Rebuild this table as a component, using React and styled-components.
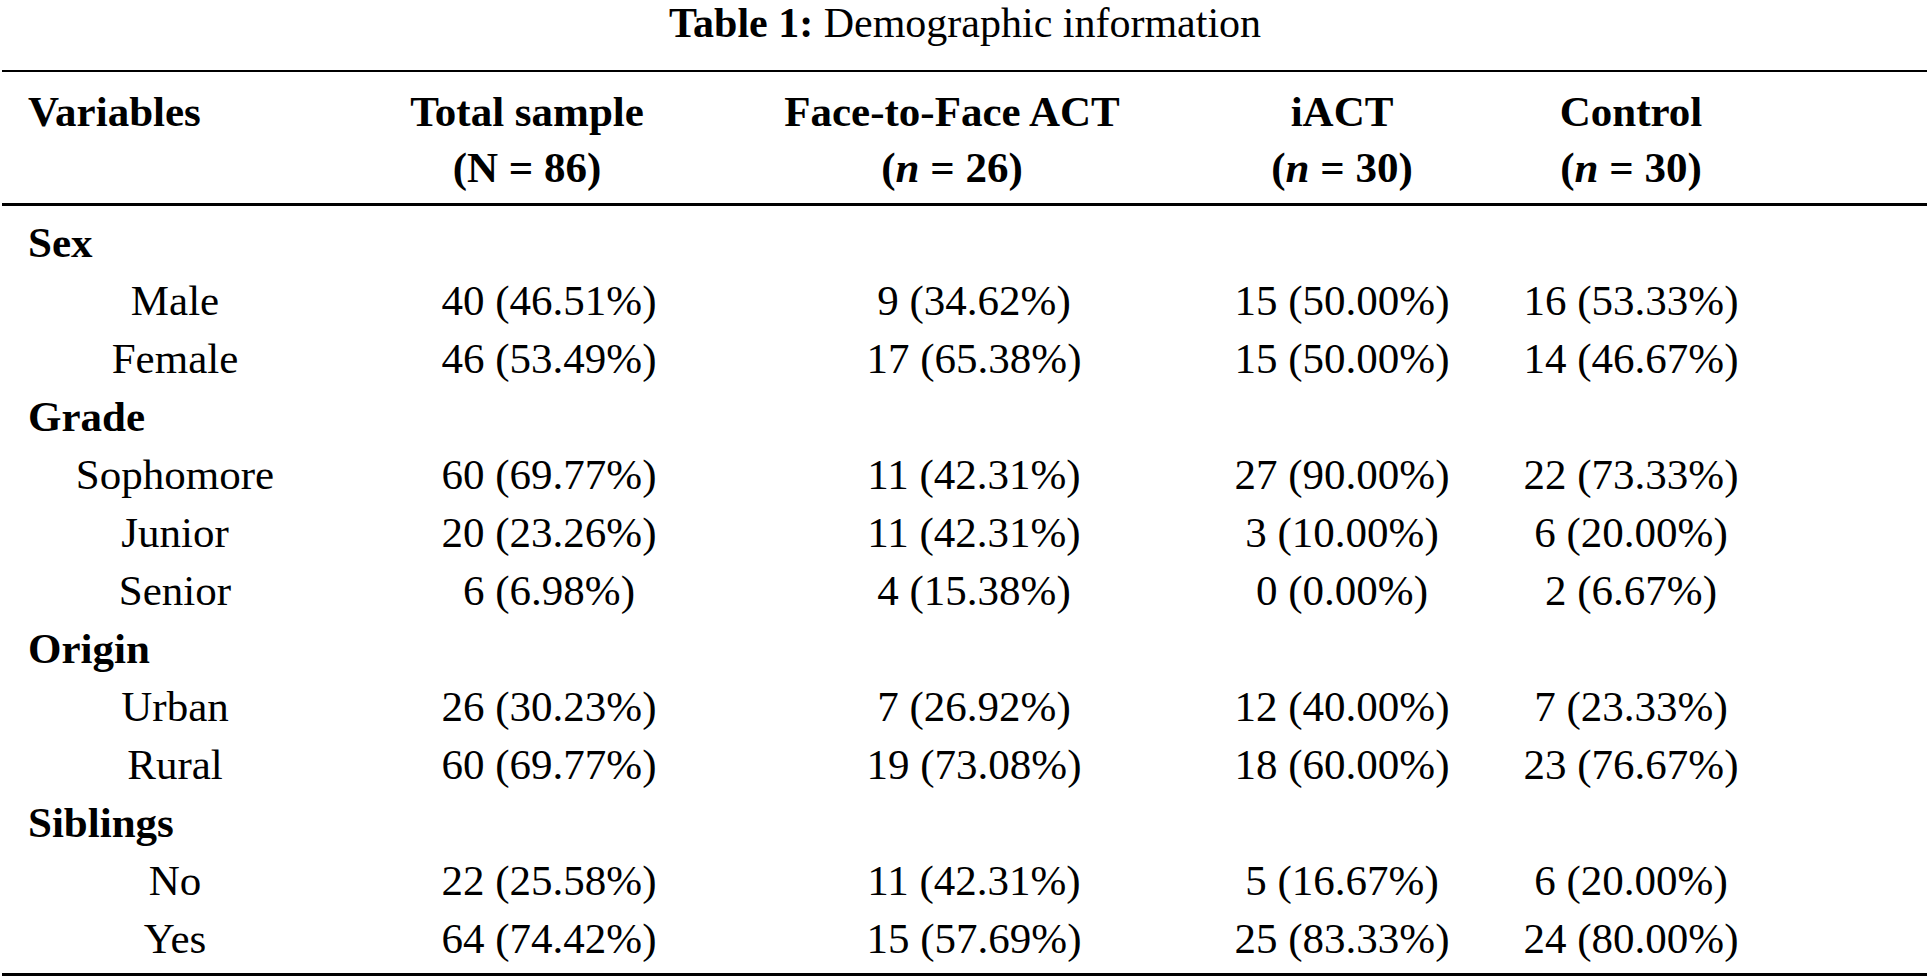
import React from "react";
import styled, { createGlobalStyle } from "styled-components";

const GlobalStyle = createGlobalStyle`
  html, body {
    margin: 0;
    padding: 0;
    background: #ffffff;
  }
  body {
    font-family: "Liberation Serif", "Times New Roman", serif;
    color: #000000;
  }
`;

const COLUMNS = "346px 358px 492px 288px 290px 1fr";

const Page = styled.main`
  width: 1930px;
  height: 978px;
  overflow: hidden;
  font-family: "Liberation Serif", "Times New Roman", serif;
  font-size: 43px;
  color: #000;
`;

const Caption = styled.div`
  height: 47px;
  line-height: 47px;
  font-size: 42px;
  text-align: center;
  margin-bottom: 23px;
  white-space: nowrap;
`;

const CaptionLabel = styled.span`
  font-weight: 700;
`;

const Table = styled.section`
  margin-left: 2px;
  width: 1925px;
  border-top: 2px solid #000;
  border-bottom: 3px solid #000;
`;

const Head = styled.div`
  display: grid;
  grid-template-columns: ${COLUMNS};
  padding: 12px 0 7px;
  border-bottom: 3px solid #000;
  font-weight: 700;
  line-height: 56px;
`;

const HeadCell = styled.div`
  display: flex;
  flex-direction: column;
  align-items: ${(p) => (p.$left ? "flex-start" : "center")};
  padding-left: ${(p) => (p.$left ? "26px" : "0")};
  white-space: nowrap;
`;

const Body = styled.div`
  padding: 8px 0 5px;
`;

const Row = styled.div`
  display: grid;
  grid-template-columns: ${COLUMNS};
  height: 58px;
  line-height: 58px;
  white-space: nowrap;
`;

const LabelCell = styled.div`
  padding: 0 26px;
  text-align: ${(p) => (p.$group ? "left" : "center")};
  font-weight: ${(p) => (p.$group ? 700 : 400)};
`;

const ValueCell = styled.div`
  text-align: center;
  padding-left: ${(p) => (p.$shift ? "44px" : "0")};
`;

const Italic = styled.i`
  font-style: italic;
`;

const headers = [
  { title: "Total sample", sym: "N", value: "86", italic: false },
  { title: "Face-to-Face ACT", sym: "n", value: "26", italic: true },
  { title: "iACT", sym: "n", value: "30", italic: true },
  { title: "Control", sym: "n", value: "30", italic: true },
];

const groups = [
  {
    name: "Sex",
    rows: [
      ["Male", "40 (46.51%)", "9 (34.62%)", "15 (50.00%)", "16 (53.33%)"],
      ["Female", "46 (53.49%)", "17 (65.38%)", "15 (50.00%)", "14 (46.67%)"],
    ],
  },
  {
    name: "Grade",
    rows: [
      ["Sophomore", "60 (69.77%)", "11 (42.31%)", "27 (90.00%)", "22 (73.33%)"],
      ["Junior", "20 (23.26%)", "11 (42.31%)", "3 (10.00%)", "6 (20.00%)"],
      ["Senior", "6 (6.98%)", "4 (15.38%)", "0 (0.00%)", "2 (6.67%)"],
    ],
  },
  {
    name: "Origin",
    rows: [
      ["Urban", "26 (30.23%)", "7 (26.92%)", "12 (40.00%)", "7 (23.33%)"],
      ["Rural", "60 (69.77%)", "19 (73.08%)", "18 (60.00%)", "23 (76.67%)"],
    ],
  },
  {
    name: "Siblings",
    rows: [
      ["No", "22 (25.58%)", "11 (42.31%)", "5 (16.67%)", "6 (20.00%)"],
      ["Yes", "64 (74.42%)", "15 (57.69%)", "25 (83.33%)", "24 (80.00%)"],
    ],
  },
];

export default function App() {
  return (
    <>
      <GlobalStyle />
      <Page>
        <Caption>
          <CaptionLabel>Table 1:</CaptionLabel> Demographic information
        </Caption>
        <Table>
          <Head>
            <HeadCell $left>
              <span>Variables</span>
            </HeadCell>
            {headers.map((h) => (
              <HeadCell key={h.title}>
                <span>{h.title}</span>
                <span>
                  ({h.italic ? <Italic>{h.sym}</Italic> : h.sym} = {h.value})
                </span>
              </HeadCell>
            ))}
            <div />
          </Head>
          <Body>
            {groups.map((g) => (
              <React.Fragment key={g.name}>
                <Row>
                  <LabelCell $group>{g.name}</LabelCell>
                </Row>
                {g.rows.map((r) => (
                  <Row key={r[0]}>
                    <LabelCell>{r[0]}</LabelCell>
                    {r.slice(1).map((v, i) => (
                      <ValueCell key={i} $shift={i < 2}>
                        {v}
                      </ValueCell>
                    ))}
                    <div />
                  </Row>
                ))}
              </React.Fragment>
            ))}
          </Body>
        </Table>
      </Page>
    </>
  );
}
